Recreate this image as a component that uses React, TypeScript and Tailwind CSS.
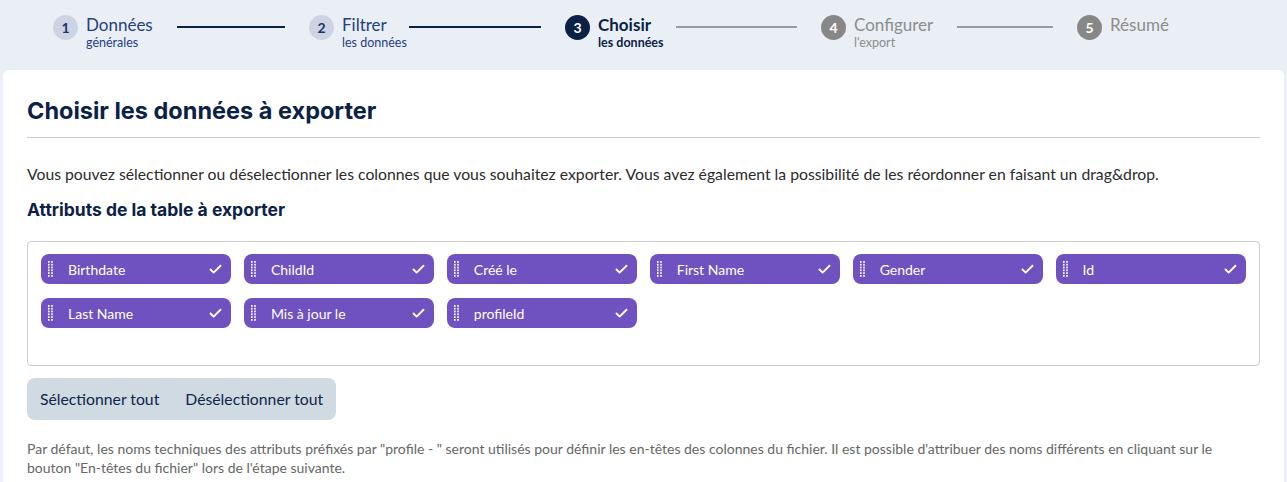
import React from 'react';
import { Check } from 'lucide-react';

type Step = {
  num: number;
  title: string;
  sub?: string;
  state: 'done' | 'active' | 'todo';
  labelW: string;
};

const STEPS: Step[] = [
  { num: 1, title: 'Données', sub: 'générales', state: 'done', labelW: 'w-[91px]' },
  { num: 2, title: 'Filtrer', sub: 'les données', state: 'done', labelW: 'w-[67px]' },
  { num: 3, title: 'Choisir', sub: 'les données', state: 'active', labelW: 'w-[78px]' },
  { num: 4, title: 'Configurer', sub: "l'export", state: 'todo', labelW: 'w-[103px]' },
  { num: 5, title: 'Résumé', state: 'todo', labelW: 'w-[103px]' },
];

const ATTRIBUTES = [
  'Birthdate',
  'ChildId',
  'Créé le',
  'First Name',
  'Gender',
  'Id',
  'Last Name',
  'Mis à jour le',
  'profileId',
];

const body = { fontFamily: 'Lato, "Open Sans", sans-serif' };
const heading = { fontFamily: 'Inter, "Liberation Sans", sans-serif' };

const DragHandle = () => (
  <svg width="5" height="17" viewBox="0 0 5 17" className="shrink-0">
    {[0, 1, 2, 3, 4, 5].map((i) => (
      <g key={i} fill="white">
        <rect x="0" y={i * 2.8} width="1.6" height="1.8" />
        <rect x="3.2" y={i * 2.8} width="1.6" height="1.8" />
      </g>
    ))}
  </svg>
);

const Stepper = () => (
  <div className="flex h-[70px] overflow-hidden pl-[53px] pt-[15px]">
    {STEPS.map((s, idx) => {
      const circle =
        s.state === 'done'
          ? 'bg-[#cdd3e3] text-[#1c3468]'
          : s.state === 'active'
          ? 'bg-[#0b2145] text-white'
          : 'bg-[#878787] text-white';
      const text =
        s.state === 'done'
          ? 'text-[#24407e]'
          : s.state === 'active'
          ? 'text-[#0b2145] font-bold'
          : 'text-[#8c8c8c]';
      const line = idx < 2 ? 'bg-[#0b2145]' : 'bg-[#9a9a9a]';
      return (
        <div key={s.num} className="flex w-[256px] shrink-0 items-start">
          <div
            className={`flex h-[25px] w-[25px] shrink-0 items-center justify-center rounded-full text-[14px] font-bold ${circle}`}
          >
            {s.num}
          </div>
          <div className={`ml-[8px] shrink-0 ${s.labelW}`}>
            <div className={`text-[17px] leading-[20px] whitespace-nowrap ${text}`}>{s.title}</div>
            {s.sub && (
              <div className={`text-[12.5px] leading-[16px] whitespace-nowrap ${text}`}>{s.sub}</div>
            )}
          </div>
          {idx < STEPS.length - 1 && (
            <div className={`mr-6 mt-[11px] h-[1.5px] flex-1 ${line}`} />
          )}
        </div>
      );
    })}
  </div>
);

export default function App() {
  return (
    <div className="min-h-screen bg-[#eaeff6] text-[#333]" style={body}>
      <Stepper />
      <div className="mx-[3px] rounded-t-md bg-white px-6 pb-4">
        <h1 className="pt-[24px] pb-[9px] text-[23.5px] leading-[34px] font-bold text-[#0b2145]" style={heading}>
          Choisir les données à exporter
        </h1>
        <div className="h-px bg-[#c9c9c9]" />
        <p className="mt-[26px] text-[15.75px] leading-[20px] text-[#2b2b2b]">
          Vous pouvez sélectionner ou déselectionner les colonnes que vous souhaitez exporter. Vous avez également la
          possibilité de les réordonner en faisant un drag&amp;drop.
        </p>
        <h2 className="mt-[14px] text-[17.5px] leading-[24px] font-bold text-[#0b2145]" style={heading}>
          Attributs de la table à exporter
        </h2>
        <div className="mt-[19px] h-[125px] rounded border border-[#cccccc] px-[13px] pt-[12px]">
          <div className="grid grid-cols-6 gap-x-[12.5px] gap-y-[14px]">
            {ATTRIBUTES.map((a) => (
              <div
                key={a}
                className="flex h-[30px] items-center rounded-lg bg-[#6f52c0] pl-[7px] pr-[8px] text-white"
              >
                <DragHandle />
                <span className="ml-[15px] flex-1 truncate text-[14px]">{a}</span>
                <Check size={15} strokeWidth={3} />
              </div>
            ))}
          </div>
        </div>
        <div className="mt-3 inline-flex h-[42px] items-center gap-[26px] rounded-lg bg-[#cfdae3] px-[13px] text-[15.75px] text-[#0f2548]">
          <span>Sélectionner tout</span>
          <span>Désélectionner tout</span>
        </div>
        <p className="mt-[19px] text-[14px] leading-[19px] text-[#666]">
          Par défaut, les noms techniques des attributs préfixés par "profile - " seront utilisés pour définir les
          en-têtes des colonnes du fichier. Il est possible d'attribuer des noms différents en cliquant sur le bouton
          "En-têtes du fichier" lors de l'étape suivante.
        </p>
      </div>
    </div>
  );
}
